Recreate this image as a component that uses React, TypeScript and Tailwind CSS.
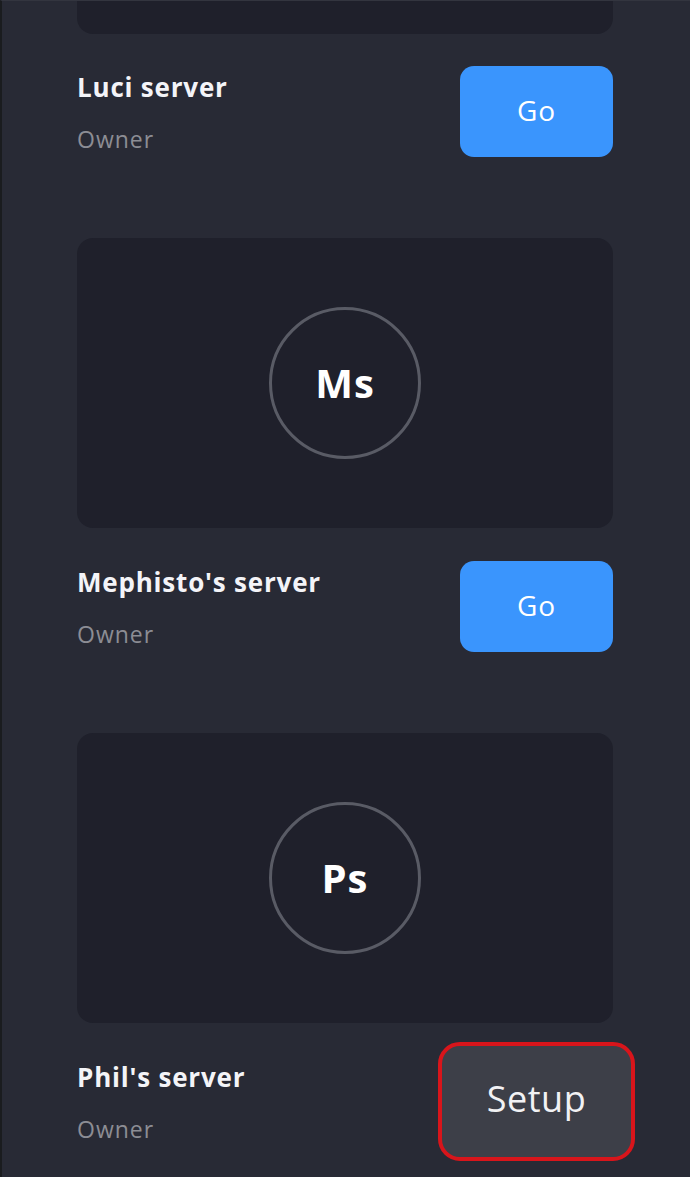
import React from 'react';

interface Server {
  name: string;
  initials: string;
  role: string;
  action: 'go' | 'setup';
}

const servers: Server[] = [
  { name: 'Luci server', initials: 'Ls', role: 'Owner', action: 'go' },
  { name: "Mephisto's server", initials: 'Ms', role: 'Owner', action: 'go' },
  { name: "Phil's server", initials: 'Ps', role: 'Owner', action: 'setup' },
];

const ServerCard: React.FC<{ initials: string; className?: string }> = ({ initials, className }) => (
  <div className={`h-[290px] rounded-[16px] bg-[#1f202b] flex items-center justify-center ${className || ''}`}>
    <div className="w-[152px] h-[152px] rounded-full border-[3px] border-[#595b65] flex items-center justify-center">
      <span className="text-[40px] tracking-[1px] font-bold text-white leading-none">{initials}</span>
    </div>
  </div>
);

const ServerRow: React.FC<{ server: Server }> = ({ server }) => (
  <div className="flex items-center justify-between h-[91px]">
    <div className="flex flex-col">
      <span className="text-[26px] tracking-[0.8px] leading-[32px] font-bold text-[#f4f4f8]">{server.name}</span>
      <span className="text-[23px] tracking-[1px] leading-[28px] text-[#8c8d94] mt-[22px]">{server.role}</span>
    </div>
    {server.action === 'go' ? (
      <button className="w-[153px] h-[91px] pb-[4px] rounded-[14px] bg-[#3a95fd] text-white text-[28px] tracking-[1px]">Go</button>
    ) : (
      <button className="w-[197px] h-[119px] pb-[5px] -mr-[22px] rounded-[22px] border-[4px] border-[#d8151b] bg-[#3d3f48] text-[#f2f2f4] text-[36px] tracking-[0.5px]">
        Setup
      </button>
    )}
  </div>
);

export default function App() {
  return (
    <div
      className="w-[690px] h-[1177px] overflow-hidden bg-[#282a35] border-l-2 border-l-[#1a1c1f] border-t border-t-[#33353f]"
      style={{ fontFamily: '"Open Sans", Lato, sans-serif' }}
    >
      <div className="w-[536px] ml-[75px]">
        <ServerCard initials="" className="-mt-[257px]" />
        {servers.map((s, i) => (
          <div key={s.name}>
            <div className={i === 0 ? 'mt-[32px]' : 'mt-[33px]'}>
              <ServerRow server={s} />
            </div>
            {i < servers.length - 1 && <ServerCard initials={servers[i + 1].initials} className="mt-[81px]" />}
          </div>
        ))}
      </div>
    </div>
  );
}
